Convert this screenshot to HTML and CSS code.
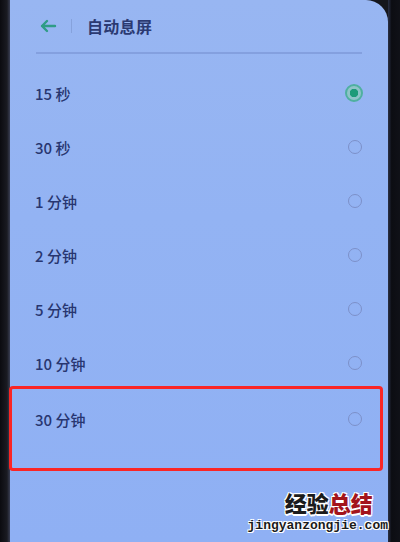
FILE: index.html
```html
<!DOCTYPE html>
<html lang="zh-CN">
<head>
  <meta charset="UTF-8">
  <title>自动息屏</title>
  <link rel="stylesheet" href="styles.css">
</head>
<body>

  <div class="phone">
    <div class="bezel-left"></div>

    <div class="screen">
      <!-- Header -->
      <div class="header">
        <svg class="back" width="18" height="14" viewBox="0 0 18 14">
          <path d="M16 7H3M8 2L3 7l5 5" fill="none" stroke="#2f9c86" stroke-width="2.4" stroke-linecap="round" stroke-linejoin="round"/>
        </svg>
        <span class="sep"></span>
        <h2>自动息屏</h2>
      </div>
      <div class="rule"></div>

      <!-- Options -->
      <ul class="options">
        <li><span>15 秒</span><i class="radio checked"></i></li>
        <li><span>30 秒</span><i class="radio"></i></li>
        <li><span>1 分钟</span><i class="radio"></i></li>
        <li><span>2 分钟</span><i class="radio"></i></li>
        <li><span>5 分钟</span><i class="radio"></i></li>
        <li><span>10 分钟</span><i class="radio"></i></li>
        <li><span>30 分钟</span><i class="radio"></i></li>
      </ul>
    </div>

    <div class="bezel-right"></div>

    <div class="mark"></div>

    <div class="watermark">
      <div class="wm-title">经验<em>总结</em></div>
      <div class="wm-url">jingyanzongjie.com</div>
    </div>
  </div>

</body>
</html>
```

FILE: styles.css
```css
body {
  margin: 0;
  padding: 0;
  font-family: "Noto Sans CJK SC", "Noto Sans", sans-serif;
  background: #15161c;
}

.phone {
  position: relative;
  display: flex;
  width: 400px;
  height: 542px;
  overflow: hidden;
}

.bezel-left {
  width: 10px;
  background: linear-gradient(to right, #0b0b10 0, #1a1b22 70%, #3a3f55 100%);
}

.bezel-right {
  width: 12px;
  background: linear-gradient(to right, #2a3045 0, #0c0d12 30%, #101117 100%);
}

.screen {
  flex: 1;
  background: linear-gradient(180deg, #98b6f2 0%, #93b3f3 40%, #8fb0f4 100%);
  border-top-right-radius: 22px;
  color: #283670;
}

/* Header */
.header {
  display: flex;
  align-items: center;
  height: 52px;
  padding-left: 29px;
}

.back {
  margin-top: -1px;
}

.sep {
  width: 1px;
  height: 14px;
  background: #86a2dc;
  margin: 0 15px 0 14px;
}

.header h2 {
  margin: 0;
  font-size: 16px;
  font-weight: 700;
  color: #2b3a72;
  letter-spacing: 0.3px;
}

.rule {
  height: 2px;
  margin: 0 26px;
  background: #7f9bd9;
  opacity: 0.8;
}

/* Options */
.options {
  list-style: none;
  margin: 12px 0 0;
  padding: 0;
}

.options li {
  display: flex;
  align-items: center;
  justify-content: space-between;
  height: 54px;
  padding: 0 26px 0 25px;
  font-size: 15px;
  font-weight: 500;
}

.options li:last-child {
  height: 56px;
  margin-top: 1px;
}

.radio {
  width: 12px;
  height: 12px;
  border: 1.5px solid #7c90c9;
  border-radius: 50%;
}

.radio.checked {
  width: 14px;
  height: 14px;
  border: 2px solid #4fb0a0;
  background: radial-gradient(circle, #1e9b78 0 4px, #8fc4c8 4.5px);
  margin-right: -1px;
}

/* Annotation overlay */
.mark {
  position: absolute;
  left: 9px;
  top: 386px;
  width: 368px;
  height: 79px;
  border: 3px solid #fa2525;
  border-radius: 4px;
}

.watermark {
  position: absolute;
  right: 12px;
  bottom: 9px;
  text-align: center;
}

.wm-title {
  font-size: 22px;
  font-weight: 900;
  color: #1b1b1b;
  line-height: 22px;
  padding-left: 22px;
  text-shadow: -1px -1px 0 #fff, 1px -1px 0 #fff, -1px 1px 0 #fff, 1px 1px 0 #fff, 0 2px 0 #fff;
}

.wm-title em {
  font-style: normal;
  color: #a3141c;
}

.wm-url {
  margin-top: 6px;
  font-family: "Liberation Mono", monospace;
  font-size: 13px;
  font-weight: bold;
  color: #1b1b1b;
  line-height: 14px;
  text-shadow: -1px -1px 0 #fff, 1px -1px 0 #fff, -1px 1px 0 #fff, 1px 1px 0 #fff;
}
```
